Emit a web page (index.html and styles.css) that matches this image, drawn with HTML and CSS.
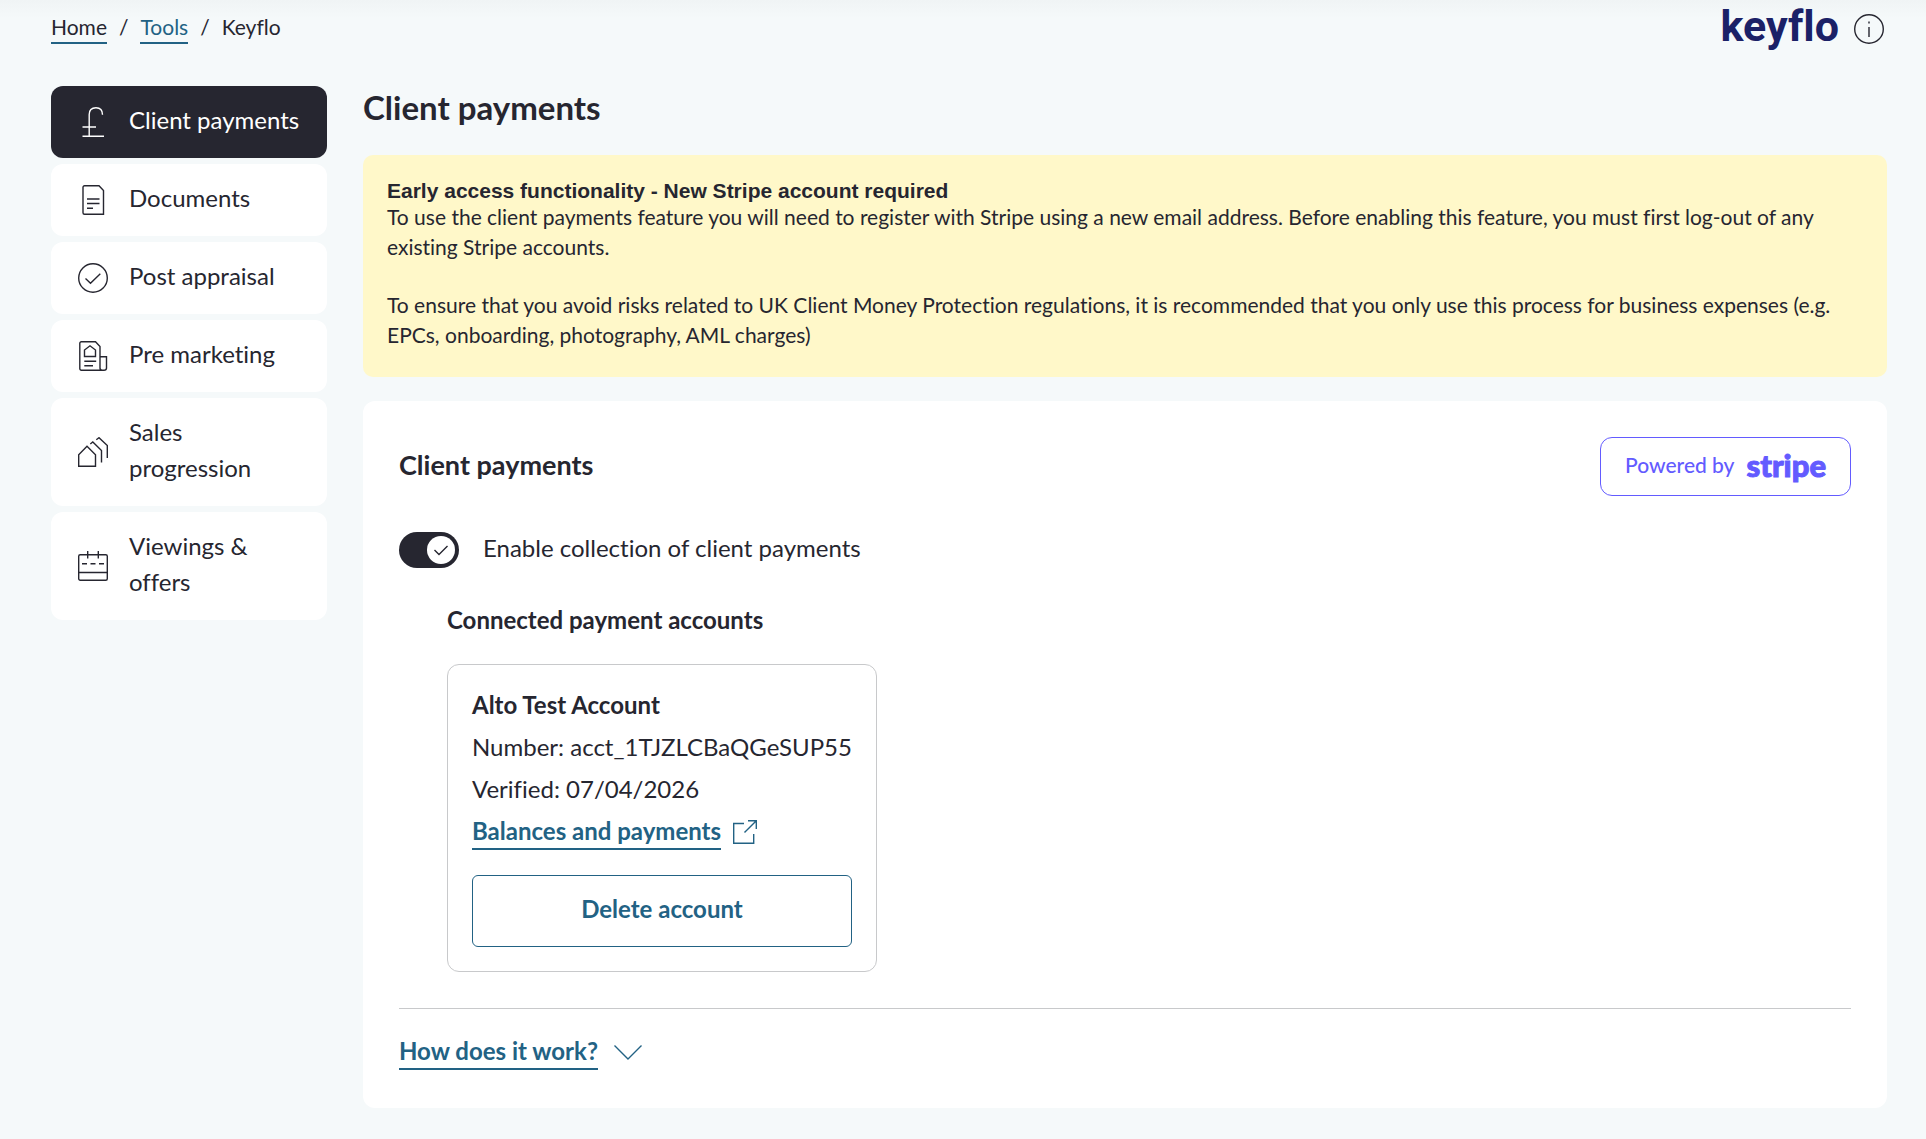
FILE: index.html
```html
<!DOCTYPE html>
<html lang="en">
<head>
    <meta charset="UTF-8">
    <meta name="viewport" content="width=device-width, initial-scale=1.0">
    <title>Keyflo - Client payments</title>
    <link rel="stylesheet" href="styles.css">
</head>
<body>
    <!-- Breadcrumb and logo -->
    <header class="topbar">
        <nav class="breadcrumb" aria-label="Breadcrumb">
            <a href="#" class="home">Home</a>
            <span>/</span>
            <a href="#">Tools</a>
            <span>/</span>
            <span>Keyflo</span>
        </nav>
        <div class="brand">
            <span class="logo">keyflo</span>
            <button type="button" class="info" aria-label="About Keyflo">
                <svg class="icon" viewBox="0 0 30 30"><circle cx="15" cy="15" r="14.3"/><path d="M15 13v10M15 7.5v2"/></svg>
            </button>
        </div>
    </header>

    <div class="layout">
        <!-- Side menu -->
        <nav class="menu" aria-label="Keyflo">
            <a href="#" class="menu-item active">
                <svg class="icon" viewBox="0 0 30 30"><path d="M4.500 29.300H26M4.500 20H18M11.200 29V7.500C11.200 3 14 .7 18 .7s6.500 2.500 6.500 7"/></svg>
                <span>Client payments</span>
            </a>
            <a href="#" class="menu-item">
                <svg class="icon" viewBox="0 0 30 30"><path d="M6.500 .7H21l4.500 4.800v23.800H6.500a1.500 1.500 0 0 1-1.500-1.500V2.200A1.500 1.500 0 0 1 6.500 .7zM9 14h12.500M9 18.500h12.500M9 23.300h6"/></svg>
                <span>Documents</span>
            </a>
            <a href="#" class="menu-item">
                <svg class="icon" viewBox="0 0 30 30"><circle cx="15" cy="15" r="14.300"/><path d="M7.500 15.500l5 4.700 9.800-9.500"/></svg>
                <span>Post appraisal</span>
            </a>
            <a href="#" class="menu-item">
                <svg class="icon" viewBox="0 0 30 30"><path d="M22 29.300H3.300a1.500 1.500 0 0 1-1.500-1.500V2.200A1.500 1.500 0 0 1 3.300 .7H17.500L22 5.500v21.800c0 2.700 6.500 2.700 6.500 0V15.700H22M22 29.300h4.500M6.500 15.500V9L12 4.800 17.500 9v6.500zM6.300 20.300h11.900M6.300 24.700H15"/></svg>
                <span>Pre marketing</span>
            </a>
            <a href="#" class="menu-item">
                <svg class="icon" viewBox="0 0 30 30"><path d="M.7 29.300V17.700L9 9.300l8.500 8.400v11.600zM12.300 7l2.500-2 8.700 8.500v12M18.300 2.700L21 .7l8.300 7.800V21"/></svg>
                <span>Sales progression</span>
            </a>
            <a href="#" class="menu-item">
                <svg class="icon" viewBox="0 0 30 30"><rect x=".7" y="3.700" width="28.600" height="25.600" rx="1.500"/><path d="M9.700 0v7.500M20.300 0v7.500M.7 21.500h28.600"/><path d="M4 12.700h22" stroke-dasharray="5 3.500"/></svg>
                <span>Viewings &amp; offers</span>
            </a>
        </nav>

        <main class="content">
            <h1>Client payments</h1>

            <!-- Early access notice -->
            <section class="notice">
                <h2>Early access functionality - New Stripe account required</h2>
                <p>To use the client payments feature you will need to register with Stripe using a new email address. Before enabling this feature, you must first log-out of any existing Stripe accounts.</p>
                <p>To ensure that you avoid risks related to UK Client Money Protection regulations, it is recommended that you only use this process for business expenses (e.g. EPCs, onboarding, photography, AML charges)</p>
            </section>

            <!-- Payments card -->
            <section class="card">
                <div class="card-header">
                    <h2>Client payments</h2>
                    <a href="#" class="powered">Powered by <span class="stripe">stripe</span></a>
                </div>

                <div class="toggle-row">
                    <span class="toggle">
                        <input type="checkbox" id="enable-payments" checked>
                        <svg viewBox="0 0 28 28" aria-hidden="true"><path d="M7.500 14l4.500 4.500 8.500-8.500"/></svg>
                    </span>
                    <label for="enable-payments">Enable collection of client payments</label>
                </div>

                <div class="accounts">
                    <h3>Connected payment accounts</h3>
                    <div class="account">
                        <h4>Alto Test Account</h4>
                        <p>Number: acct_1TJZLCBaQGeSUP55</p>
                        <p>Verified: 07/04/2026</p>
                        <p class="account-link">
                            <a href="#" class="link">Balances and payments</a>
                            <svg class="external" viewBox="0 0 24 24"><path d="M11 3.500H.7v19.800h20V14M11.500 12.500L23.300 .7M15 .7h8.300V9"/></svg>
                        </p>
                        <button type="button" class="delete">Delete account</button>
                    </div>
                </div>

                <div class="help">
                    <a href="#" class="link">How does it work?</a>
                    <svg class="chevron" viewBox="0 0 28 15"><path d="M.5 .5L14 14 27.500 .5"/></svg>
                </div>
            </section>
        </main>
    </div>
</body>
</html>
```

FILE: styles.css
```css
* {
    box-sizing: border-box;
}
body {
    font-family: Lato, 'Liberation Sans', sans-serif;
    font-size: 24px;
    line-height: 36px;
    font-variant-ligatures: none;
    background: #f5f9fa linear-gradient(#f0f4f5, #f5f9fa 18px) no-repeat;
    margin: 0;
    padding: 0 39px 31px 51px;
    color: #262630;
}
h1, h2, h3, h4, p {
    margin: 0;
}
a {
    color: #226284;
    text-decoration: none;
}
button {
    font: inherit;
    cursor: pointer;
}
svg {
    display: block;
    flex: none;
    fill: none;
    stroke: currentColor;
    stroke-width: 1.4;
}
.icon {
    width: 30px;
    height: 30px;
}

/* Top bar */
.topbar {
    display: flex;
    justify-content: space-between;
    height: 86px;
}
.breadcrumb {
    display: flex;
    align-items: flex-start;
    gap: 12px;
    padding-top: 12px;
    font-size: 21px;
    line-height: 30px;
}
.breadcrumb a {
    border-bottom: 2px solid #226284;
}
.breadcrumb .home {
    color: #262630;
}
.brand {
    display: flex;
    align-items: flex-start;
    gap: 15px;
    padding-right: 3px;
}
.logo {
    font-family: Roboto, sans-serif;
    font-size: 43px;
    font-weight: 700;
    line-height: 52px;
    color: #1b2167;
}
.info {
    margin-top: 14px;
    padding: 0;
    border: 0;
    background: none;
    color: #262630;
}

/* Layout */
.layout {
    display: grid;
    grid-template-columns: 276px 1fr;
    gap: 36px;
    align-items: start;
}
.menu {
    display: grid;
    gap: 6px;
}
.menu-item {
    display: flex;
    align-items: center;
    gap: 21px;
    padding: 18px 24px 18px 27px;
    border-radius: 12px;
    background: #fff;
    color: #262630;
}
.menu-item span {
    padding-bottom: 2px;
    margin-top: -2px;
}
.menu-item.active {
    background: #262630;
    color: #fff;
}

/* Main column */
.content h1 {
    font-size: 33px;
    line-height: 43px;
    margin-bottom: 26px;
}
.notice {
    padding: 24px 24px 27px;
    margin-bottom: 24px;
    border-radius: 10px;
    background: #fff8c9;
    font-size: 21px;
    line-height: 30px;
}
.notice h2 {
    font-family: 'Liberation Sans', Arial, sans-serif;
    font-size: 21px;
    line-height: 24px;
    margin-bottom: -1px;
}
.notice p + p {
    margin-top: 28px;
}
.card {
    padding: 36px;
    border-radius: 12px;
    background: #fff;
}
.card-header {
    display: flex;
    justify-content: space-between;
    align-items: center;
}
.card-header h2 {
    padding-bottom: 3px;
    font-size: 27px;
}
.powered {
    display: flex;
    align-items: center;
    gap: 12px;
    height: 59px;
    padding: 0 24px 4px;
    border: 1px solid #635bff;
    border-radius: 12px;
    color: #635bff;
    font-size: 21px;
    font-weight: 500;
}
.stripe {
    font-size: 31px;
    font-weight: 900;
    -webkit-text-stroke: 1px #635bff;
}

/* Toggle */
.toggle-row {
    display: flex;
    align-items: center;
    gap: 24px;
    margin-top: 36px;
}
.toggle-row label {
    padding-bottom: 2px;
    margin-top: -2px;
}
.toggle {
    position: relative;
    height: 36px;
}
.toggle input {
    appearance: none;
    display: block;
    width: 60px;
    height: 36px;
    margin: 0;
    border-radius: 18px;
    background: #262630;
    cursor: pointer;
}
.toggle svg {
    position: absolute;
    top: 4px;
    right: 4px;
    width: 28px;
    height: 28px;
    border-radius: 50%;
    background: #fff;
    pointer-events: none;
}

/* Accounts */
.accounts {
    padding: 34px 48px 36px;
}
.accounts h3 {
    font-size: 24px;
    margin-bottom: 26px;
}
.account {
    width: fit-content;
    padding: 19px 24px 24px;
    border: 1px solid #c8c9cb;
    border-radius: 12px;
    line-height: 42px;
}
.account h4 {
    font-size: 24px;
}
.account-link {
    display: flex;
    align-items: center;
    gap: 12px;
    height: 44px;
}
.link {
    font-weight: 700;
    line-height: 34px;
    border-bottom: 2px solid #226284;
}
.external {
    width: 24px;
    height: 24px;
    color: #226284;
}
.delete {
    width: 100%;
    height: 72px;
    margin-top: 21px;
    padding-bottom: 5px;
    border: 1px solid #226284;
    border-radius: 6px;
    background: #fff;
    color: #226284;
    font-weight: 700;
}
.help {
    display: flex;
    align-items: center;
    gap: 16px;
    padding: 25px 0 2px;
    border-top: 1px solid #c8c9cb;
}
.chevron {
    width: 28px;
    height: 15px;
    color: #226284;
}
```
